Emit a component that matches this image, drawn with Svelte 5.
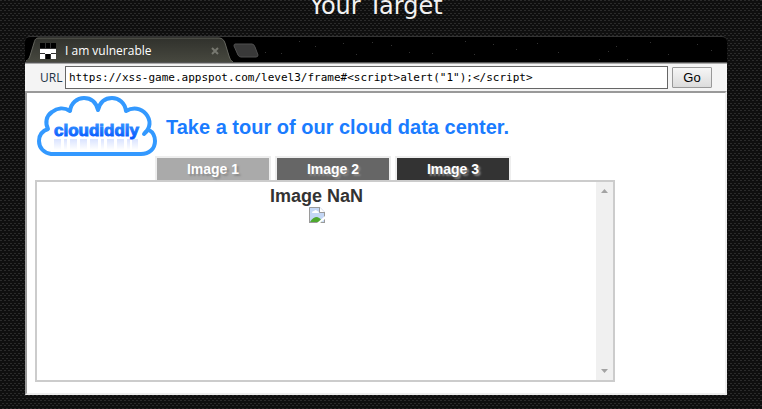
<script>
  const tabs = [
    { id: 1, label: 'Image 1', tone: 'light' },
    { id: 2, label: 'Image 2', tone: 'mid' },
    { id: 3, label: 'Image 3', tone: 'dark' }
  ];

  const stars = [
    [240, 15], [256, 16], [274, 4], [290, 9], [318, 6], [331, 17], [347, 5],
    [366, 8], [384, 15], [407, 16], [440, 4], [449, 17], [468, 7], [491, 12],
    [512, 6], [533, 15], [574, 22], [583, 14], [591, 9], [602, 22], [625, 5],
    [643, 17], [672, 7], [686, 13]
  ];

  // stems of the mirrored wordmark: [x, width]
  const stems = [
    [17, 7], [27, 3], [33, 7], [43, 7], [53, 8], [64, 3], [70, 7], [80, 7], [90, 3], [95, 6]
  ];

  let url = $state('https://xss-game.appspot.com/level3/frame#<script>alert("1");<\/script>');
  let selected = $state(NaN);

  function go(event) {
    event.preventDefault();
    selected = parseInt(url.split('#')[1]);
  }
</script>

<main>
  <h2>Your Target</h2>

  <section class="browser">
    <div class="strip">
      <svg class="stars" aria-hidden="true">
        {#each stars as [cx, cy]}
          <rect x={cx} y={cy} width="1" height="1" fill="#333" />
        {/each}
      </svg>
      <div class="page-tab">
        <svg class="shape" viewBox="0 0 208 25" aria-hidden="true">
          <defs>
            <linearGradient id="tab-fill" x1="0" y1="0" x2="0" y2="1">
              <stop offset="0" stop-color="#30312c" />
              <stop offset="1" stop-color="#47483f" />
            </linearGradient>
          </defs>
          <path
            d="M0 25 C3 24 4 22 5 19 L9 6 C10 2 11 1 14 1 L194 1 C197 1 199 3 200 6 L204 19 C205 22 206 24 208 25 Z"
            fill="url(#tab-fill)"
          />
          <path
            d="M1 24 C3 23 4 22 5 19 L9 6 C10 2 11 1 14 1 L194 1 C197 1 199 3 200 6 L204 19 C205 22 206 24 208 25"
            fill="none"
            stroke="#65665f"
          />
        </svg>
        <svg class="favicon" viewBox="0 0 16 16" aria-hidden="true">
          <rect width="16" height="16" fill="#000" />
          <path d="M5.500 0v16M10.500 0v16M0 5.500h16M0 10.500h16" stroke="#333" />
          <path d="M0 6h5v4H0zM5 6h6v5H5zM11 6h5v4h-5zM0 11h5v5H0zM11 11h5v5h-5z" fill="#fff" />
        </svg>
        <span class="title">I am vulnerable</span>
        <button class="close" type="button" aria-label="Close tab">
          <svg viewBox="0 0 8 8"><path d="M1 1l6 6M7 1l-6 6" stroke="#777870" stroke-width="2" /></svg>
        </button>
      </div>
      <button class="new-tab" type="button" aria-label="New tab">
        <svg viewBox="0 0 26 15">
          <path d="M2 1h17q2 0 3 3l3 8q0 2-2 2H8q-2 0-3-2L1 3q0-2 1-2z" fill="#393939" stroke="#505050" />
        </svg>
      </button>
    </div>

    <form class="toolbar" onsubmit={go}>
      <label for="url">URL</label>
      <input id="url" type="text" spellcheck="false" bind:value={url} />
      <button type="submit">Go</button>
    </form>

    <div class="frame">
      <header>
        <svg class="logo" viewBox="0 0 120 61" role="img" aria-label="cloudiddly">
          <defs>
            <linearGradient id="word" x1="0" y1="0" x2="0" y2="1">
              <stop offset="0" stop-color="#3a9dff" />
              <stop offset="1" stop-color="#0050ff" />
            </linearGradient>
            <linearGradient id="mirror" x1="0" y1="0" x2="0" y2="1">
              <stop offset="0" stop-color="#d9e3ff" />
              <stop offset="1" stop-color="#fff" />
            </linearGradient>
          </defs>
          <path
            d="M14 58 C7 57 2 52 2 45 C2 39 5 35 11 33 C8 27 9 20 15 16 C20 12 27 11 33 15 C34 7 40 2 47 2 C54 2 59 6 61 14 C63 6 68 2 75 2 C82 2 88 7 89 15 C96 11 104 12 109 18 C114 24 114 32 107 38 C109 35 111 34 112 34 C116 36 118 41 118 45 C118 53 112 58 104 58 Z"
            fill="#fff"
            stroke="#3399ff"
            stroke-width="4"
            stroke-linejoin="round"
          />
          {#each stems as [x, width]}
            <rect {x} y="43" {width} height="11" fill="url(#mirror)" />
          {/each}
          <text x="17" y="40">cloudiddly</text>
        </svg>
        <h1>Take a tour of our cloud data center.</h1>
      </header>

      <nav class="tabs">
        {#each tabs as tab (tab.id)}
          <button type="button" class={tab.tone} onclick={() => (selected = tab.id)}>{tab.label}</button>
        {/each}
      </nav>

      <div class="viewer">
        <div class="content">
          <strong>Image {selected}</strong>
          <svg class="broken" viewBox="0 0 16 16" role="img" aria-label="Image unavailable">
            <path d="M0 0h11l5 5v11H0z" fill="#c4d7f5" />
            <path d="M3 6q0-2 2-2 2-2 3 0 2 0 2 2z" fill="#fff" />
            <path d="M1 15q3-5 7-5 4 1 5 5z" fill="#4ea92f" />
            <path d="M.5 16V.5h10l5 5V16M0 15.500h16" fill="none" stroke="#9a9a9a" />
            <path d="M10.500 0v5.500H16" fill="#fff" stroke="#9a9a9a" />
            <path d="M16 9L8 16h3l5-4z" fill="#fff" />
          </svg>
        </div>
        <div class="scrollbar" aria-hidden="true">
          <svg viewBox="0 0 7 4"><path d="M0 4l3.500-4L7 4z" fill="#a3a3a3" /></svg>
          <svg viewBox="0 0 7 4"><path d="M0 0h7L3.500 4z" fill="#a3a3a3" /></svg>
        </div>
      </div>
    </div>
  </section>
</main>

<style>
  :global(body) {
    background: #0f0f0f url("data:image/svg+xml,%3Csvg xmlns='http://www.w3.org/2000/svg' width='4' height='5'%3E%3Cpath d='M0 0h2v1H0zM2 3h2v1H2z' fill='%232b2b2b'/%3E%3C/svg%3E");
    overflow: hidden;
  }
  main {
    padding: 0 35px 14px 25px;
    font-family: 'Liberation Sans', Arial, sans-serif;
  }
  h2 {
    margin: 0 0 24px;
    color: #f2f2f2;
    font: 400 24px/12px 'DejaVu Sans', sans-serif;
    text-align: center;
  }
  button {
    margin: 0;
    font-family: inherit;
    cursor: pointer;
  }
  svg {
    display: block;
  }
  .strip {
    position: relative;
    display: flex;
    align-items: flex-end;
    box-sizing: border-box;
    height: 27px;
    border-top: 1px solid #333;
    border-bottom: 1px solid #555;
    border-radius: 5px 5px 0 0;
    background: #000;
  }
  .stars {
    position: absolute;
    inset: 0;
    width: 100%;
    height: 100%;
  }
  .page-tab {
    position: relative;
    display: flex;
    align-items: center;
    box-sizing: border-box;
    width: 208px;
    height: 25px;
    padding: 2px 14px 0 15px;
  }
  .shape {
    position: absolute;
    inset: 0;
  }
  .favicon {
    position: relative;
    width: 16px;
    height: 16px;
  }
  .title {
    position: relative;
    flex: 1;
    margin-left: 9px;
    color: #fff;
    font: 12px/16px 'Open Sans', sans-serif;
    white-space: nowrap;
  }
  .close,
  .new-tab {
    position: relative;
    padding: 0;
    border: 0;
    background: none;
  }
  .close svg {
    width: 8px;
    height: 8px;
  }
  .new-tab {
    margin-bottom: 4px;
  }
  .new-tab svg {
    width: 26px;
    height: 15px;
  }
  .toolbar {
    display: flex;
    align-items: center;
    gap: 4px;
    box-sizing: border-box;
    height: 28px;
    padding: 0 15px;
    border-top: 1px solid #aaa;
    background: #f4f4f4;
  }
  .toolbar label {
    width: 21px;
    color: #234;
    font: 12px/16px 'Open Sans', sans-serif;
  }
  .toolbar input {
    flex: 1;
    min-width: 0;
    box-sizing: border-box;
    height: 23px;
    padding: 0 3px;
    border: 1px solid #666;
    background: #fff;
    color: #000;
    font: 11px/16px 'DejaVu Sans Mono', monospace;
  }
  .toolbar button {
    box-sizing: border-box;
    width: 40px;
    height: 21px;
    padding: 0;
    border: 1px solid #999;
    border-radius: 1px;
    background: linear-gradient(#f6f6f6, #dcdcdc);
    color: #000;
    font-size: 13px;
    line-height: 16px;
  }
  .frame {
    padding: 0 8px 11px;
    border: 2px solid;
    border-color: #999 #eee #eee #999;
    background: #fff;
  }
  header {
    display: flex;
    align-items: center;
    gap: 9px;
    box-sizing: border-box;
    height: 63px;
    padding: 4px 2px 0;
  }
  .logo {
    flex: none;
    width: 120px;
    height: 61px;
  }
  .logo text {
    fill: url(#word);
    stroke: url(#word);
    stroke-width: 1;
    font: 700 17px 'Liberation Sans', sans-serif;
  }
  h1 {
    margin: 0;
    color: #1a7cff;
    font-size: 20px;
    line-height: 24px;
  }
  .tabs {
    display: flex;
    gap: 4px;
    padding-left: 120px;
  }
  .tabs button {
    box-sizing: border-box;
    width: 116px;
    height: 24px;
    padding: 0;
    border: 2px solid #eee;
    border-bottom: 0;
    color: #fff;
    font-size: 14px;
    font-weight: 700;
    line-height: 16px;
    text-shadow: 2px 2px 2px #888;
  }
  .tabs .light {
    background: #aaa;
  }
  .tabs .mid {
    background: #666;
  }
  .tabs .dark {
    background: #333;
  }
  .viewer {
    display: flex;
    box-sizing: border-box;
    max-width: 580px;
    height: 202px;
    border: 2px solid #ccc;
  }
  .content {
    flex: 1;
    display: flex;
    flex-direction: column;
    align-items: center;
    padding-top: 4px;
    color: #333;
    font-size: 18px;
    line-height: 21px;
  }
  .broken {
    width: 16px;
    height: 16px;
  }
  .scrollbar {
    display: flex;
    flex-direction: column;
    justify-content: space-between;
    align-items: center;
    box-sizing: border-box;
    width: 17px;
    padding: 7px 0;
    background: #f0f0f0;
  }
  .scrollbar svg {
    width: 7px;
    height: 4px;
  }
</style>
